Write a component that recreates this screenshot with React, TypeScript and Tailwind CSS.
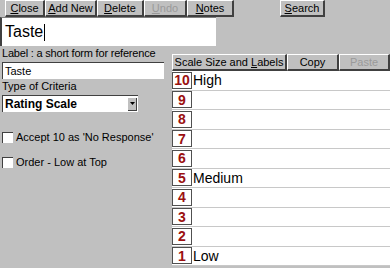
import React from "react";

const Btn = ({ children, className = "", disabled = false }: { children: React.ReactNode; className?: string; disabled?: boolean }) => (
  <div
    className={`flex h-[17px] items-center justify-center border-t border-l border-t-white border-l-white border-r-2 border-b-2 border-r-[#404040] border-b-[#404040] bg-[#c0c0c0] text-[11px] leading-none ${disabled ? "text-[#9a9a9a]" : "text-black"} ${className}`}
  >
    {children}
  </div>
);

const rows: [number, string][] = [
  [10, "High"],
  [9, ""],
  [8, ""],
  [7, ""],
  [6, ""],
  [5, "Medium"],
  [4, ""],
  [3, ""],
  [2, ""],
  [1, "Low"],
];

export default function App() {
  return (
    <div
      className="relative h-[268px] w-[390px] overflow-hidden bg-[#c0c0c0] text-black"
      style={{ fontFamily: '"Liberation Sans", Arial, sans-serif' }}
    >
      {/* top toolbar */}
      <div className="flex h-[17px] items-start pl-[5px]">
        <Btn className="w-[40px]"><span><u>C</u>lose</span></Btn>
        <Btn className="w-[52px]"><span><u>A</u>dd New</span></Btn>
        <Btn className="w-[47px]"><span><u>D</u>elete</span></Btn>
        <Btn className="w-[43px]" disabled><span><u>U</u>ndo</span></Btn>
        <Btn className="w-[47px]"><span><u>N</u>otes</span></Btn>
        <div className="w-[46px]" />
        <Btn className="w-[45px]"><span><u>S</u>earch</span></Btn>
      </div>

      {/* big title input */}
      <div className="flex h-[29px] w-[216px] items-center border-l-2 border-t border-l-[#404040] border-t-[#808080] bg-white pl-[3px] text-[16px] leading-none">
        Taste<span className="ml-[1px] inline-block h-[17px] w-[1px] bg-black" />
      </div>

      <div className="flex">
        {/* left column */}
        <div className="flex w-[172px] flex-col pl-[2px]">
          <div className="mt-[1px] text-[11px] leading-[13px] tracking-[-0.2px]">Label : a short form for reference</div>
          <div className="mt-[2px] flex h-[17px] w-[162px] items-center border-l border-t border-l-[#404040] border-t-[#404040] bg-white pl-[2px] text-[11px] leading-none">
            Taste
          </div>
          <div className="mt-[1px] text-[11px] leading-[13px]">Type of Criteria</div>
          <div className="mt-[2px] flex h-[17px] w-[136px] items-center border-l border-t border-l-[#404040] border-t-[#404040] bg-white pl-[2px] text-[12px] font-bold leading-none">
            <span className="flex-1">Rating Scale</span>
            <div className="mr-[1px] flex h-[13px] w-[9px] items-center justify-center border-r border-b border-r-[#404040] border-b-[#404040] bg-[#c0c0c0]">
              <svg width="5" height="3" viewBox="0 0 5 3"><path d="M0 0h5L2.5 3z" fill="#000" /></svg>
            </div>
          </div>
          <div className="mt-[20px] flex items-center text-[11px] leading-none">
            <div className="h-[11px] w-[11px] border-l border-t border-l-[#404040] border-t-[#404040] bg-white" />
            <span className="ml-[3px]">Accept 10 as 'No Response'</span>
          </div>
          <div className="mt-[14px] flex items-center text-[11px] leading-none">
            <div className="h-[11px] w-[11px] border-l border-t border-l-[#404040] border-t-[#404040] bg-white" />
            <span className="ml-[3px]">Order - Low at Top</span>
          </div>
        </div>

        {/* right panel */}
        <div className="mt-[8px] flex w-[218px] flex-col">
          <div className="flex">
            <Btn className="w-[115px]"><span>Scale Size and <u>L</u>abels</span></Btn>
            <Btn className="w-[52px]"><span>Copy</span></Btn>
            <Btn className="w-[51px]" disabled><span>Paste</span></Btn>
          </div>
          <div className="flex flex-col">
            {rows.map(([n, label]) => (
              <div key={n} className="flex h-[19.5px] items-center border-b border-b-[#c8c8c8] bg-white">
                <div className="flex h-[17px] w-[20px] items-center justify-center border border-[#505050] bg-white text-[14px] font-bold leading-none text-[#9b1010]">
                  {n}
                </div>
                <span className="ml-[1px] text-[14px] leading-none">{label}</span>
              </div>
            ))}
          </div>
        </div>
      </div>
    </div>
  );
}
